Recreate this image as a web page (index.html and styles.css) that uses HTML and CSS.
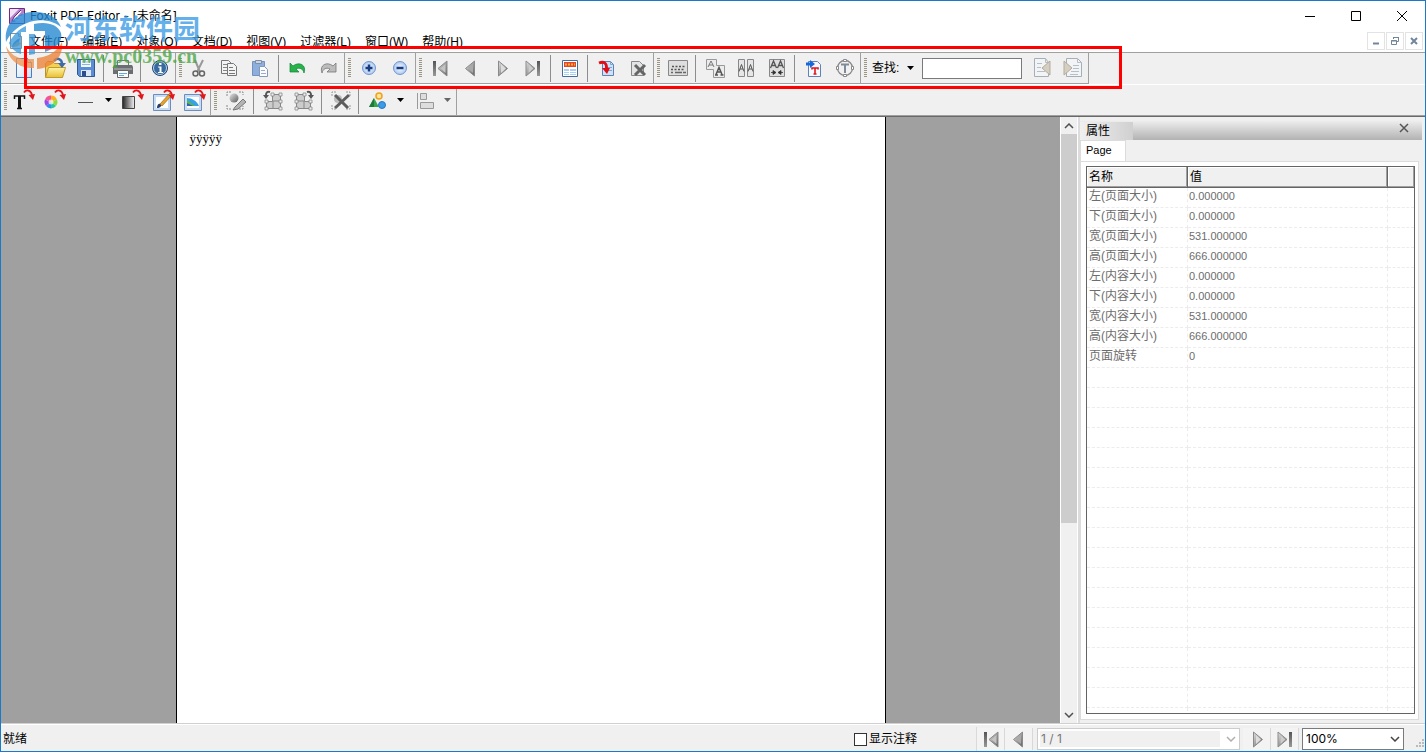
FILE: index.html
```html
<!DOCTYPE html>
<html lang="zh-CN">
<head>
<meta charset="utf-8">
<title>Foxit PDF Editor - [未命名]</title>
<link rel="stylesheet" href="styles.css">
</head>
<body>
<svg class="defs" aria-hidden="true">
  <defs>
    <linearGradient id="gray" x1="0" y1="0" x2="1" y2="1"><stop offset="0" stop-color="#e4e4e4"/><stop offset="1" stop-color="#5c5c5c"/></linearGradient>
    <linearGradient id="bar" x1="0" y1="0" x2="0" y2="1"><stop offset="0" stop-color="#555"/><stop offset="1" stop-color="#999"/></linearGradient>
    <linearGradient id="fade" x1="0" y1="0" x2="1" y2="0"><stop offset="0" stop-color="#222"/><stop offset="1" stop-color="#f4f4f4"/></linearGradient>
    <linearGradient id="folder" x1="0" y1="0" x2="0" y2="1"><stop offset="0" stop-color="#fff3a6"/><stop offset="1" stop-color="#e9bf32"/></linearGradient>
    <linearGradient id="sheet" x1="0" y1="0" x2="1" y2="1"><stop offset="0" stop-color="#fff"/><stop offset="1" stop-color="#cfe2f8"/></linearGradient>
    <radialGradient id="lens"><stop offset="0" stop-color="#fff"/><stop offset="1" stop-color="#a9c6ef"/></radialGradient>
  </defs>
  <symbol id="first" viewBox="0 0 22 22"><path d="M4 4h3v15H4z" fill="url(#bar)"/><path d="M18 4v15l-9-7.500z" fill="url(#gray)" stroke="#8a8a8a"/><path d="M16.500 7v9l-5-4.500z" fill="#c4c4c4"/></symbol>
  <symbol id="prev" viewBox="0 0 22 22"><path d="M14.500 4v15l-9-7.500z" fill="url(#gray)" stroke="#8a8a8a"/><path d="M13 7v9l-5-4.500z" fill="#aaa"/></symbol>
  <symbol id="next" viewBox="0 0 22 22"><path d="M7.500 4v15l9-7.500z" fill="url(#gray)" stroke="#8a8a8a"/><path d="M10 7l5 4.500-5 4.500z" fill="#ddd"/></symbol>
  <symbol id="last" viewBox="0 0 22 22"><path d="M15 4h3v15h-3z" fill="url(#bar)"/><path d="M4 4v15l9-7.500z" fill="url(#gray)" stroke="#8a8a8a"/><path d="M6.500 7l5 4.500-5 4.500z" fill="#ccc"/></symbol>
  <symbol id="down" viewBox="0 0 8 5"><path d="M0 0h7L3.500 4z" fill="currentColor"/></symbol>
  <symbol id="chevron" viewBox="0 0 10 6"><path d="M1 1l4 4 4-4" fill="none" stroke="currentColor" stroke-width="1.500"/></symbol>
  <symbol id="curl" viewBox="0 0 12 11"><path d="M1 3.500C3 .5 8 .5 9 6" fill="none" stroke="currentColor" stroke-width="1.800"/><path d="M5.500 6l6.500-1-2 6z" fill="currentColor"/></symbol>
</svg>

<div class="window">
  <header class="titlebar">
    <svg class="app-icon" viewBox="0 0 16 16"><path d="M.5.5h15v15H.5z" fill="#efe3f4" stroke="#6d2a87"/><path d="M1 15V10L10 1h5v4L6 14z" fill="#b481c8"/><path d="M4 12L12 3M6 12h5M8 9h5" stroke="#fff" stroke-width="1.500"/><path d="M3 13l2-4 7-7" fill="none" stroke="#6d2a87"/></svg>
    <h1 class="title">Foxit PDF Editor - [未命名]</h1>
    <div class="caption">
      <button aria-label="最小化"><svg viewBox="0 0 12 12"><path d="M1 6.500h10" stroke="#000"/></svg></button>
      <button aria-label="最大化"><svg viewBox="0 0 12 12"><path d="M1.500 1.500h9v9h-9z" fill="none" stroke="#000"/></svg></button>
      <button aria-label="关闭"><svg viewBox="0 0 12 12"><path d="M1 1l10 10M11 1L1 11" stroke="#000"/></svg></button>
    </div>
  </header>

  <nav class="menubar">
    <svg class="doc-icon" viewBox="0 0 14 16"><path d="M1.500.5h8l3 3v12h-11z" fill="#fff" stroke="#8a8f96"/><path d="M9.500.5v3h3" fill="none" stroke="#8a8f96"/><path d="M3 14c1-5 4-7 8-9-1 5-3 8-8 9z" fill="#3f74ad"/><path d="M3 14l5-5 4 1c-2 3-5 4-9 4z" fill="#e09a4e"/></svg>
    <div class="menus">
      <button>文件(F)</button><button>编辑(E)</button><button>对象(O)</button><button>文档(D)</button><button>视图(V)</button><button>过滤器(L)</button><button>窗口(W)</button><button>帮助(H)</button>
    </div>
    <div class="mdi">
      <button aria-label="最小化文档"><svg viewBox="0 0 10 10"><path d="M2 7.500h6" stroke="#71869b" stroke-width="2"/></svg></button>
      <button aria-label="还原文档"><svg viewBox="0 0 10 10"><path d="M3.500 3V1.500h5v4H7M3 1.500h6M1.500 4.500h5v4h-5zM1 5h6" fill="none" stroke="#71869b"/></svg></button>
      <button aria-label="关闭文档"><svg viewBox="0 0 10 10"><path d="M2 2l6 6M8 2L2 8" stroke="#71869b" stroke-width="2"/></svg></button>
    </div>
  </nav>

  <div class="toolbars">
    <div class="toolrow">
      <div class="group"><i class="grip"></i>
        <button class="tool" aria-label="新建"><svg viewBox="0 0 22 22"><path d="M3.500 1.500h11l4 4v15h-15z" fill="url(#sheet)" stroke="#4a7cc4"/><path d="M14.500 1.500v4h4" fill="#dceafb" stroke="#4a7cc4"/></svg></button>
        <button class="tool" aria-label="打开"><svg viewBox="0 0 22 22"><path d="M1.500 20V6.500l2-2h5l2 2h8V20z" fill="#f1d257" stroke="#b8912a"/><path d="M1.500 20.500l3-10h17l-3 10z" fill="url(#folder)" stroke="#c39b2c"/><path d="M10 4C13 0 18 2 18 7" fill="none" stroke="#3e6ca8" stroke-width="2.500"/><path d="M14 6h8l-4 5z" fill="#3e6ca8"/></svg></button>
        <button class="tool" aria-label="保存"><svg viewBox="0 0 22 22"><path d="M2.500 2.500h17v17h-15l-2-2z" fill="#5b8cd4" stroke="#2e5999"/><path d="M6 3h10v7H6z" fill="#f3f8fd"/><path d="M7 5h8M7 7.500h8" stroke="#8fb3e2"/><path d="M6 13h10v6H6z" fill="#dbe7f6"/><path d="M7 14h4v5H7z" fill="#2b4f8e"/></svg></button>
        <i class="sep"></i>
        <button class="tool" aria-label="打印"><svg viewBox="0 0 22 22"><path d="M5.500 9V3.500h11V9" fill="#eee" stroke="#777"/><path d="M2 8h18l1 2v7H1v-7z" fill="#6b6f73"/><path d="M2 12h18" stroke="#bbb"/><path d="M5.500 13.500h11v7h-11z" fill="#f9fcff" stroke="#666"/><path d="M7 16.500h8M7 18.500h5" stroke="#6ba8d8"/></svg></button>
        <i class="sep"></i>
        <button class="tool" aria-label="信息"><svg viewBox="0 0 22 22"><circle cx="11" cy="11" r="7.500" fill="#376a9e" stroke="#24496f"/><circle cx="11" cy="11" r="6.500" fill="none" stroke="#b7d2ee"/><path d="M10 6h2.500v2H10zM9 9.500h3.500V15H14v1H9v-1h1.500v-4.500H9z" fill="#fff"/></svg></button>
      </div>
      <div class="group"><i class="grip"></i>
        <button class="tool" aria-label="剪切"><svg viewBox="0 0 22 22"><path d="M7 3l5 12M15 3L9 15" stroke="#999" stroke-width="2"/><circle cx="7.500" cy="16.500" r="2.500" fill="none" stroke="#666" stroke-width="1.500"/><circle cx="14" cy="16.500" r="2.500" fill="none" stroke="#666" stroke-width="1.500"/></svg></button>
        <button class="tool" aria-label="复制"><svg viewBox="0 0 22 22"><path d="M2.500 3.500h7l3 3v10h-10z" fill="#f4f4f4" stroke="#777"/><path d="M4 7.500h5M4 10.500h5M4 13.500h5" stroke="#888"/><path d="M8.500 6.500h6l3 3v9h-9z" fill="#f4f4f4" stroke="#777"/><path d="M10 10.500h4M10 13.500h6M10 16.500h6" stroke="#777"/></svg></button>
        <button class="tool" aria-label="粘贴"><svg viewBox="0 0 22 22"><path d="M2.500 4.500h12v14h-12z" fill="#8eaedb" stroke="#7191c1"/><path d="M5.500 3.500h6v3h-6z" fill="#c8d3e4" stroke="#7d8ea8"/><path d="M9.500 9.500h5l3 3v7h-8z" fill="#fbfcff" stroke="#8498b8"/><path d="M11 13.500h4M11 16.500h5" stroke="#9aaccb"/></svg></button>
        <i class="sep"></i>
        <button class="tool" aria-label="撤销"><svg viewBox="0 0 22 22"><path d="M3 6v9h9l-3-3c4-2 7 0 8 4 3-8-5-12-11-7z" fill="#27b34a" stroke="#168238" stroke-width=".7"/></svg></button>
        <button class="tool" aria-label="重做"><svg viewBox="0 0 22 22"><path d="M18 6v9H9l3-3c-4-2-7 0-8 4-3-8 5-12 11-7z" fill="#bcbcbc" stroke="#777" stroke-width=".8"/></svg></button>
      </div>
      <div class="group"><i class="grip mid"></i>
        <button class="tool" aria-label="放大"><svg viewBox="0 0 22 22"><circle cx="11" cy="11" r="6.500" fill="url(#lens)" stroke="#7197d2"/><path d="M11 7.500v7M7.500 11h7" stroke="#173c83" stroke-width="2.500"/></svg></button>
        <button class="tool" aria-label="缩小"><svg viewBox="0 0 22 22"><circle cx="11" cy="11" r="6.500" fill="url(#lens)" stroke="#7197d2"/><path d="M7.500 11h7" stroke="#173c83" stroke-width="2.500"/></svg></button>
      </div>
      <div class="group"><i class="grip mid"></i>
        <button class="tool" aria-label="首页"><svg><use href="#first"/></svg></button>
        <button class="tool" aria-label="上一页"><svg><use href="#prev"/></svg></button>
        <button class="tool" aria-label="下一页"><svg><use href="#next"/></svg></button>
        <button class="tool" aria-label="末页"><svg><use href="#last"/></svg></button>
        <i class="sep"></i>
        <button class="tool" aria-label="页面布局"><svg viewBox="0 0 22 22"><path d="M3.500 3.500h15v16h-15z" fill="#fff" stroke="#4a6b9a"/><path d="M5 5h12v5H5z" fill="#e0482c"/><path d="M6 7.500h10" stroke="#ffb030" stroke-width="2" stroke-dasharray="2 1"/><path d="M5 12h5v6H5zM11 12h6v6h-6z" fill="#a9d0f5"/><path d="M5 14.500h12M5 16.500h12" stroke="#fff"/></svg></button>
        <i class="sep"></i>
        <button class="tool" aria-label="插入页面"><svg viewBox="0 0 22 22"><path d="M6.500 4.500h8l3 3v11h-11z" fill="#cfe2f8" stroke="#5d83b5"/><path d="M14.500 4.500v3h3M12 10.500h4M12 13.500h4" fill="none" stroke="#7ea4d4"/><path d="M3 6c5-2 8 0 7.500 6" fill="none" stroke="#e20c15" stroke-width="2.800"/><path d="M6 11h8l-3 6z" fill="#e20c15"/></svg></button>
        <button class="tool" aria-label="删除页面"><svg viewBox="0 0 22 22"><path d="M4.500 4.500h8l4 4v10h-12z" fill="#e4e4e4" stroke="#888"/><path d="M8 8l10 10M18 8L8 18" stroke="#656565" stroke-width="3"/></svg></button>
      </div>
      <div class="group"><i class="grip mid"></i>
        <button class="tool" aria-label="键盘"><svg viewBox="0 0 22 22"><path d="M1.500 3.500h19v15h-19z" fill="#dedede" stroke="#888"/><path d="M5 9.500h14M4 12.500h14" stroke="#555" stroke-width="1.500" stroke-dasharray="2 1.500"/><path d="M4 15.500h2M8 15.500h7M16 15.500h3" stroke="#666" stroke-width="1.500"/></svg></button>
        <i class="sep"></i>
        <button class="tool" aria-label="拆分文本"><svg viewBox="0 0 22 22"><path d="M2.500 2.500h10v6h8v12h-11v-8h-7z" fill="#ececec" stroke="#999"/><path d="M4 10l3-6 3 6M5 8h4" fill="none" stroke="#777"/><path d="M12 17.500l3-7 3 7M13 15h4M11 18h3M16.500 18h3" fill="none" stroke="#555" stroke-width="1.500"/></svg></button>
        <button class="tool" aria-label="分隔文本"><svg viewBox="0 0 22 22"><path d="M3.500 2.500h6v17h-6zM12.500 2.500h6v17h-6z" fill="#e6e6e6" stroke="#888"/><path d="M4 14.500l2.500-7 2.500 7M5 12h3M13 14.500l2.500-7 2.500 7M14 12h3" fill="none" stroke="#555"/></svg></button>
        <button class="tool" aria-label="合并文本"><svg viewBox="0 0 22 22"><path d="M3.500 2.500h15v17h-15z" fill="#dedede" stroke="#888"/><path d="M4.500 11l3-7 3 7M5.500 8.500h4M11.500 11l3-7 3 7M12.500 8.500h4" fill="none" stroke="#555" stroke-width="1.300"/><path d="M5 15.500h4M17 15.500h-4M7 13.500l3 2-3 2zM15 13.500l-3 2 3 2z" stroke="#333" fill="#333" stroke-width=".8"/></svg></button>
        <i class="sep"></i>
        <button class="tool" aria-label="导入文字"><svg viewBox="0 0 22 22"><path d="M5.500 4.500h9l3 3v12h-12z" fill="#f5faff" stroke="#5e83b8"/><path d="M3 5.500h4V3l5 4-5 4V8.500H3z" fill="#1768d8"/><path d="M9 12.500V11h6v1.500M12 11v6M10.500 17h3" fill="none" stroke="#df171c" stroke-width="1.600"/></svg></button>
        <button class="tool" aria-label="文字对象"><svg viewBox="0 0 22 22"><circle cx="11" cy="11" r="7.500" fill="#f1f1f1" stroke="#888" stroke-width="1.300"/><path d="M7 7.500h8M11 7.500V16" stroke="#7e8b98" stroke-width="2"/><path d="M9.500 2.500h3v2h-3zM9.500 17.500h3v2h-3zM2.500 9.500h2v3h-2zM17.500 9.500h2v3h-2z" fill="#fff" stroke="#888"/></svg></button>
      </div>
      <div class="group find"><i class="grip"></i>
        <label for="find">查找:</label>
        <button class="arrow" aria-label="查找选项"><svg><use href="#down"/></svg></button>
        <input id="find" type="text">
        <button class="tool" aria-label="查找上一个"><svg viewBox="0 0 22 22"><path d="M3.500 1.500h11l3 4v14h-14z" fill="#f2f4f6" stroke="#a5afba"/><path d="M14.500 1.500v4h3M6 6.500h5M6 10.500h4M6 14.500h8" fill="none" stroke="#b6bec7"/><path d="M19 4v14l-8-7z" fill="#d4cfc2" stroke="#b5ad9c"/></svg></button>
        <button class="tool" aria-label="查找下一个"><svg viewBox="0 0 22 22"><path d="M4.500 1.500h11l4 4v14h-15z" fill="#f2f4f6" stroke="#a5afba"/><path d="M15.500 1.500v4h4M11 8.500h6M11 11.500h6M9 14.500h8M8 17.500h8" fill="none" stroke="#b6bec7"/><path d="M2 4l8 7-8 7z" fill="#d4cfc2" stroke="#b5ad9c"/></svg></button>
      </div>
    </div>

    <div class="toolrow second">
      <div class="group"><i class="grip"></i>
        <button class="tool" aria-label="添加文字"><svg viewBox="0 0 22 22"><path d="M1.500 9V6h10v3M4 18.500h5" fill="none" stroke="#111" stroke-width="1.500"/><path d="M6.500 6v12" stroke="#111" stroke-width="3"/></svg><svg class="curl"><use href="#curl"/></svg></button>
        <button class="tool" aria-label="颜色"><svg viewBox="0 0 22 22"><g transform="translate(-3)"><path d="M10 12V5.500a6.500 6.500 0 0 1 6 4z" fill="#ffb01f"/><path d="M10 12l6-2.500a6.500 6.500 0 0 1-1 6.500z" fill="#8ddc3f"/><path d="M10 12l5 4a6.500 6.500 0 0 1-5 2.500z" fill="#28c7a0"/><path d="M10 12v6.500a6.500 6.500 0 0 1-5-2.500z" fill="#2d8df0"/><path d="M10 12l-5 4a6.500 6.500 0 0 1-1-6.500z" fill="#9b49e4"/><path d="M10 12L4 9.500a6.500 6.500 0 0 1 6-4z" fill="#f2539b"/><circle cx="10" cy="12" r="2.500" fill="#fff" opacity=".7"/></g></svg><svg class="curl"><use href="#curl"/></svg></button>
        <button class="tool" aria-label="线条"><svg viewBox="0 0 22 22"><path d="M3 12.500h15" stroke="#555"/></svg></button>
        <button class="arrow" aria-label="线条选项"><svg><use href="#down"/></svg></button>
        <button class="tool" aria-label="渐变"><svg viewBox="0 0 22 22"><path d="M.5 6.500h12v12H.5z" fill="url(#fade)" stroke="#444"/></svg><svg class="curl"><use href="#curl"/></svg></button>
        <button class="tool" aria-label="编辑路径"><svg viewBox="0 0 22 22"><path d="M.5 4.500h17v16H.5z" fill="#c8dcf4" stroke="#6d8dbd"/><path d="M3 7h12v11H3z" fill="#fff"/><path d="M4 18c0-4 2-5 4-4 1 2-1 4-4 4z" fill="#23406f"/><path d="M7 14L17 3l2 2-10 11z" fill="#e8a32c" stroke="#9b6714" stroke-width=".7"/></svg><svg class="curl"><use href="#curl"/></svg></button>
        <button class="tool" aria-label="编辑图像"><svg viewBox="0 0 22 22"><path d="M.5 4.500h17v16H.5z" fill="#c8dcf4" stroke="#6d8dbd"/><path d="M3 7h12v11H3z" fill="#fff"/><path d="M3 8c5 0 10 3 12 8H3z" fill="#38a2e8"/><path d="M3 10l8 6H3z" fill="#55bd43"/><path d="M3 13l6 3H3z" fill="#375abd"/></svg><svg class="curl"><use href="#curl"/></svg></button>
      </div>
      <div class="group"><i class="grip wide"></i>
        <button class="tool" aria-label="编辑对象"><svg viewBox="0 0 22 22"><path d="M2 6V2h4M14 2h4v3M2 15v4h4M14 19h4v-3" fill="none" stroke="#888" stroke-dasharray="2 1"/><circle cx="9" cy="8" r="4.500" fill="url(#gray)"/><path d="M10 17l8-8 3 3-8 7-5 1z" fill="#b4b4b4" stroke="#777"/></svg></button>
        <i class="sep"></i>
        <button class="tool" aria-label="逆时针旋转"><svg viewBox="0 0 22 22"><path d="M4.500 11.500h6v-7h8v14h-14z" fill="#ccc" stroke="#888"/><path d="M11 11h7M11 11v7" stroke="#888"/><path d="M3 10h3v3H3zM9 3h3v3H9zM17 3h3v3h-3zM17 17h3v3h-3zM3 17h3v3H3zM17 10h3v3h-3z" fill="#eee" stroke="#888" stroke-width=".8"/><path d="M8 2C5 1 4 3 4 5" fill="none" stroke="#555" stroke-width="2"/><path d="M1 5h6L4 9z" fill="#555"/></svg></button>
        <button class="tool" aria-label="顺时针旋转"><svg viewBox="0 0 22 22"><path d="M3.500 4.500h8v7h6v7h-14z" fill="#ccc" stroke="#888"/><path d="M11 11H4M11 11v7" stroke="#888"/><path d="M16 10h3v3h-3zM10 3h3v3h-3zM2 3h3v3H2zM2 17h3v3H2zM16 17h3v3h-3zM2 10h3v3H2z" fill="#eee" stroke="#888" stroke-width=".8"/><path d="M14 2c3-1 4 1 4 3" fill="none" stroke="#555" stroke-width="2"/><path d="M15 5h6l-3 4z" fill="#555"/></svg></button>
        <i class="sep"></i>
        <button class="tool" aria-label="删除对象"><svg viewBox="0 0 22 22"><path d="M2 6V2h4M16 2h4v4M2 15v4h4M16 19h4v-4" fill="none" stroke="#999" stroke-dasharray="2 1"/><circle cx="8" cy="9" r="4" fill="#bbb"/><path d="M5 5l13 13M19 5L5 18" stroke="#5d5d5d" stroke-width="3"/></svg></button>
        <i class="sep"></i>
        <button class="tool" aria-label="图形"><svg viewBox="0 0 22 22"><circle cx="12" cy="6" r="3" fill="#ffe39a" stroke="#eea21b" stroke-width="1.500"/><path d="M7 8l5 9H2z" fill="#38a34b"/><path d="M7 8l-5 9h5z" fill="#1d7b39"/><circle cx="15" cy="15" r="3.500" fill="#3d9be6" stroke="#2677c1"/></svg></button>
        <button class="arrow" aria-label="图形选项"><svg><use href="#down"/></svg></button>
        <button class="tool" aria-label="对齐"><svg viewBox="0 0 22 22"><path d="M3.500 3v16" stroke="#999"/><path d="M6.500 3.500h6v6h-6zM6.500 12.500h13v6h-13z" fill="#ddd" stroke="#999"/></svg></button>
        <button class="arrow muted" aria-label="对齐选项"><svg><use href="#down"/></svg></button>
      </div>
    </div>
  </div>

  <main class="workspace">
    <section class="canvas" aria-label="文档">
      <div class="desk"><article class="page">ÿÿÿÿÿ</article></div>
      <div class="scrollbar">
        <button aria-label="向上滚动"><svg class="flip"><use href="#chevron"/></svg></button>
        <div class="track"><div class="thumb"></div></div>
        <button aria-label="向下滚动"><svg><use href="#chevron"/></svg></button>
      </div>
    </section>
    <aside class="panel">
      <div class="panel-head"><h2>属性</h2><button aria-label="关闭面板"><svg viewBox="0 0 10 10"><path d="M1 1l8 8M9 1L1 9" stroke="#555" stroke-width="1.500"/></svg></button></div>
      <div class="panel-body">
        <button class="tab">Page</button>
        <div class="pane"><div class="grid">
          <table>
            <colgroup><col class="c1"><col class="c2"><col></colgroup>
            <thead><tr><th>名称</th><th>值</th><th></th></tr></thead>
            <tbody>
              <tr><td>左(页面大小)</td><td>0.000000</td><td></td></tr>
              <tr><td>下(页面大小)</td><td>0.000000</td><td></td></tr>
              <tr><td>宽(页面大小)</td><td>531.000000</td><td></td></tr>
              <tr><td>高(页面大小)</td><td>666.000000</td><td></td></tr>
              <tr><td>左(内容大小)</td><td>0.000000</td><td></td></tr>
              <tr><td>下(内容大小)</td><td>0.000000</td><td></td></tr>
              <tr><td>宽(内容大小)</td><td>531.000000</td><td></td></tr>
              <tr><td>高(内容大小)</td><td>666.000000</td><td></td></tr>
              <tr><td>页面旋转</td><td>0</td><td></td></tr>
              <tr><td></td><td></td><td></td></tr><tr><td></td><td></td><td></td></tr><tr><td></td><td></td><td></td></tr>
              <tr><td></td><td></td><td></td></tr><tr><td></td><td></td><td></td></tr><tr><td></td><td></td><td></td></tr>
              <tr><td></td><td></td><td></td></tr><tr><td></td><td></td><td></td></tr><tr><td></td><td></td><td></td></tr>
              <tr><td></td><td></td><td></td></tr><tr><td></td><td></td><td></td></tr><tr><td></td><td></td><td></td></tr>
              <tr><td></td><td></td><td></td></tr><tr><td></td><td></td><td></td></tr><tr><td></td><td></td><td></td></tr>
              <tr><td></td><td></td><td></td></tr><tr><td></td><td></td><td></td></tr><tr><td></td><td></td><td></td></tr>
            </tbody>
          </table>
        </div></div>
      </div>
    </aside>
  </main>

  <footer class="status">
    <span class="ready">就绪</span>
    <label class="notes"><input type="checkbox">显示注释</label>
    <div class="pager">
      <button class="nav" aria-label="首页"><svg><use href="#first"/></svg></button>
      <button class="nav" aria-label="上一页"><svg><use href="#prev"/></svg></button>
      <div class="combo pages"><select aria-label="页码" disabled><option>1 / 1</option></select><svg><use href="#chevron"/></svg></div>
      <button class="nav" aria-label="下一页"><svg><use href="#next"/></svg></button>
      <button class="nav" aria-label="末页"><svg><use href="#last"/></svg></button>
      <div class="combo zoom"><select aria-label="缩放"><option>100%</option></select><svg><use href="#chevron"/></svg></div>
      <svg class="resize" viewBox="0 0 10 10"><path d="M7 0h2v2H7zM4 3h2v2H4zM7 3h2v2H7zM1 6h2v2H1zM4 6h2v2H4zM7 6h2v2H7z" fill="#bbb"/></svg>
    </div>
  </footer>

  <div class="watermark">
    <svg viewBox="0 0 58 58"><path d="M1 31C-1 14 10 2 27 1c13-1 25 4 29 15C45 8 32 8 22 12 11 16 5 23 1 31z" fill="#2387d2"/><path d="M4 32C8 24 14 18 21 15v6h-5v22C10 41 6 37 4 32z" fill="#3c9add"/><path d="M29 13c12-3 24 0 27 9 2 8-4 15-16 19V20H29z" fill="#2387d2"/><path d="M24 23h6v20l-6 1z" fill="#3c9add"/><path d="M1 35c4 8 10 12 19 13h9v9C15 58 3 49 1 35z" fill="#ee9450"/><path d="M38 46c8-2 15-7 19-15 2 14-9 26-25 27V47z" fill="#ec8238"/></svg>
    <div><p class="wm-name">河东软件园</p><p class="wm-url">www.pc0359.cn</p></div>
  </div>
  <div class="highlight"></div>
</div>
</body>
</html>
```
FILE: styles.css
```css
* { box-sizing: border-box; }
html, body { height: 100%; margin: 0; }
body { font: 12px/16px "Liberation Sans", "Noto Sans CJK SC", sans-serif; color: #000; overflow: hidden; }
button { font: inherit; color: inherit; background: none; border: 0; padding: 0; margin: 0; }
svg { display: block; flex: none; }
p, h1, h2 { margin: 0; font-weight: normal; }
.defs { position: absolute; width: 0; height: 0; }

.window { position: relative; height: 100vh; display: flex; flex-direction: column; border: 1px solid #1979ca; background: #f0f0f0; }
.titlebar { display: flex; align-items: center; height: 30px; padding-left: 8px; background: #fff; }
.app-icon { width: 16px; height: 16px; }
.title { margin-left: 5px; font: 12px/16px Inter, "Noto Sans CJK SC", sans-serif; }
.caption { display: flex; margin-left: auto; }
.caption button { width: 46px; height: 28px; display: grid; place-items: center; }
.caption svg { width: 12px; height: 12px; }

.menubar { display: flex; height: 22px; padding: 0 2px 0 8px; background: #fff; border-bottom: 1px solid #a0a0a0; }
.doc-icon { width: 14px; height: 16px; margin: 2px 6px 0 0; }
.menus { display: flex; align-items: center; gap: 14px; margin-right: auto; }
.mdi { display: flex; gap: 1px; padding-top: 1px; }
.mdi button { width: 18px; height: 18px; border: 1px solid #e3e3e3; display: grid; place-items: center; }
.mdi svg { width: 10px; height: 10px; }

.toolbars { border-bottom: 1px solid #696969; box-shadow: inset 0 -1px #a0a0a0; padding-bottom: 1px; }
.toolrow { display: flex; height: 31px; }
.toolrow.second { height: 31px; padding-top: 1px; border-top: 1px solid #fff; }
.group { display: flex; align-items: center; border-right: 1px solid #a0a0a0; }
.toolrow:first-child .group { border-bottom: 1px solid #a0a0a0; }
.grip { flex: none; width: 7px; height: 20px; background: repeating-linear-gradient(#9c9583 0 1px, #f0f0f0 1px 2px) 3px 0 / 3px 100% no-repeat; }
.grip.mid { width: 8px; }
.grip.wide { width: 9px; }
.tool { position: relative; width: 31px; height: 28px; display: grid; place-items: center; flex: none; }
.tool svg { width: 22px; height: 22px; }
.tool .curl { position: absolute; top: 2px; right: 4px; width: 12px; height: 11px; color: #e0161c; }
.sep { flex: none; width: 6px; height: 27px; background: linear-gradient(#8d8d8d, #8d8d8d) 2px 0 / 1px 100% no-repeat; }
.arrow { width: 16px; height: 28px; display: grid; place-items: center; }
.arrow svg { width: 8px; height: 5px; }
.arrow.muted { color: #666; }
.find label { margin-left: 4px; margin-right: 4px; }
.find input { width: 100px; height: 21px; margin: 0 4px 0 3px; border: 1px solid #7a7a7a; background: #fff; }

.workspace { flex: 1; min-height: 0; display: flex; }
.canvas { flex: 1; min-width: 0; display: flex; }
.desk { flex: 1; display: flex; justify-content: center; background: #a0a0a0; }
.page { width: 710px; background: #fff; border: 1px solid #000; border-width: 0 1px; padding: 14px 13px; font: 13px/16px "Liberation Serif", serif; }
.scrollbar { width: 18px; display: flex; flex-direction: column; border: 1px solid #fff; border-width: 0 1px; }
.scrollbar button { height: 17px; display: grid; place-items: center; color: #505050; }
.scrollbar svg { width: 10px; height: 6px; }
.flip { transform: rotate(180deg); }
.track { flex: 1; }
.thumb { height: 68%; background: #cdcdcd; }

.panel { width: 347px; display: flex; flex-direction: column; padding: 3px 3px 3px 0; border-left: 2px solid #dcdcdc; }
.panel-head { display: flex; justify-content: space-between; align-items: flex-end; height: 20px; background: linear-gradient(#f0f0f0, #b2b2b2); }
.panel-head h2 { width: 53px; height: 18px; padding-left: 6px; font-size: 12px; line-height: 18px; background: linear-gradient(90deg, #f0f0f0, #d0d0d0); }
.panel-head button { width: 36px; height: 24px; display: grid; place-items: center; }
.panel-head svg { width: 10px; height: 10px; }
.panel-body { flex: 1; min-height: 0; display: flex; flex-direction: column; padding-right: 3px; }
.tab { align-self: flex-start; width: 46px; height: 21px; padding: 0 0 2px 5px; text-align: left; font-size: 11px; background: #fff; border: 1px solid #dcdcdc; border-bottom: 0; }
.pane { flex: 1; min-height: 0; display: flex; padding: 4px 3px 5px 5px; background: #fff; border: 1px solid #dcdcdc; }
.grid { flex: 1; overflow: hidden; border: 1px solid #646464; }
table { width: 100%; border-collapse: separate; border-spacing: 0; table-layout: fixed; }
.c1 { width: 101px; }
.c2 { width: 200px; }
th { height: 21px; padding: 0 2px; font-weight: normal; text-align: left; line-height: 16px; background: #f0f0f0; border: 1px solid #646464; border-width: 0 1px 1px 0; box-shadow: inset -1px -1px #a0a0a0, inset 1px 1px #fff; }
th:last-child { border-right: 0; }
td { height: 20px; padding: 0 2px 3px; line-height: 16px; color: #6d6d6d; border: 1px dashed #ececec; border-width: 0 1px 1px 0; white-space: nowrap; }
td:last-child { border-right: 0; }
td:nth-child(2) { padding-left: 1px; font-size: 11px; }

.status { display: flex; align-items: center; height: 28px; padding-left: 2px; border-top: 1px solid #d0d0d0; box-shadow: inset 0 1px #fff; }
.ready { margin-right: auto; padding-top: 3px; }
.notes { display: flex; align-items: center; gap: 2px; padding-top: 3px; margin-right: 59px; }
.notes input { appearance: none; width: 13px; height: 13px; margin: 0; background: #fff; border: 1px solid #333; }
.pager { display: flex; align-items: center; align-self: flex-end; height: 24px; border-left: 1px solid #dadada; }
.nav { width: 28px; height: 22px; display: grid; place-items: center; border-right: 1px solid #d8d8d8; background: #f3f3f3; }
.nav svg { width: 22px; height: 22px; }
.combo { position: relative; height: 22px; }
.combo select { appearance: none; width: 100%; height: 22px; padding: 0 3px; font: 12px/16px Inter, sans-serif; color: #000; background: #fff; border: 1px solid #7a7a7a; border-radius: 0; opacity: 1; }
.combo svg { position: absolute; right: 4px; top: 8px; width: 10px; height: 6px; pointer-events: none; color: #444; }
.pages { width: 203px; margin: 0 3px 0 4px; }
.pages select { color: #777; border-color: #ccc; background: linear-gradient(#f0f0f0, #f0f0f0) 2px 2px / 180px 16px no-repeat #fff; }
.pages svg { color: #b0b0b0; }
.zoom { width: 102px; margin-left: 3px; }
.resize { width: 10px; height: 10px; margin: 10px 0 0 11px; }

.watermark { position: absolute; left: 4px; top: 10px; display: flex; gap: 2px; opacity: .78; pointer-events: none; }
.watermark svg { width: 58px; height: 58px; }
.wm-name { font: bold 27px/34px "Noto Sans CJK SC", sans-serif; color: #3a9be5; white-space: nowrap; }
.wm-url { font: bold 20px/22px "Liberation Serif", serif; color: #4ba646; }
.highlight { position: absolute; left: 23px; top: 45px; width: 1098px; height: 43px; border: 3px solid #f00; pointer-events: none; }
```
